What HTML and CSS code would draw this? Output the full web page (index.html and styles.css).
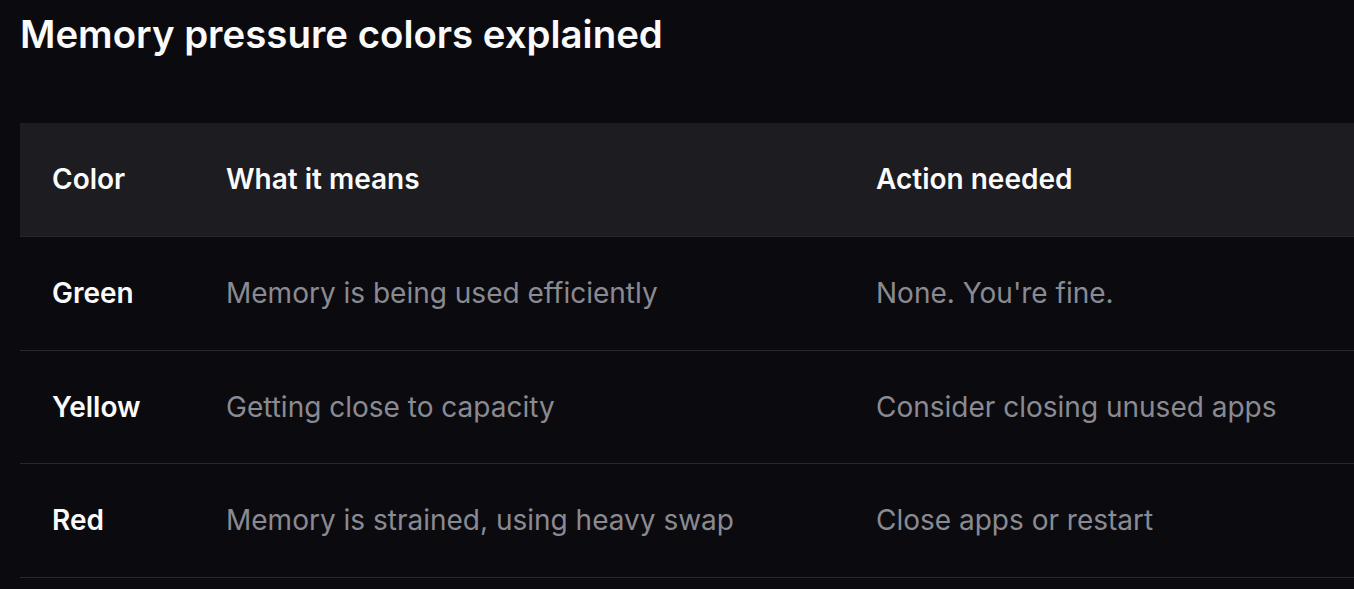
FILE: index.html
```html
<!DOCTYPE html>
<html>
<head>
<meta charset="utf-8">
<link rel="stylesheet" href="styles.css">
</head>
<body>
<main class="page">
  <h2 class="title">Memory pressure colors explained</h2>
  <table class="grid">
    <colgroup>
      <col class="c1"><col class="c2"><col class="c3">
    </colgroup>
    <thead>
      <tr><th>Color</th><th>What it means</th><th>Action needed</th></tr>
    </thead>
    <tbody>
      <tr><td class="name">Green</td><td>Memory is being used efficiently</td><td>None. You're fine.</td></tr>
      <tr><td class="name">Yellow</td><td>Getting close to capacity</td><td>Consider closing unused apps</td></tr>
      <tr><td class="name">Red</td><td>Memory is strained, using heavy swap</td><td>Close apps or restart</td></tr>
    </tbody>
  </table>
</main>
</body>
</html>
```

FILE: styles.css
```css
html, body {
  margin: 0;
  padding: 0;
  background: #0b0b0f;
  overflow: hidden;
}
.page {
  padding: 11px 0 0 20px;
  font-family: Inter, "Noto Sans", sans-serif;
  color: #fafafa;
}
.title {
  margin: 0 0 66px 0;
  font-size: 38.4px;
  line-height: 46px;
  font-weight: 600;
  letter-spacing: 0;
}
.grid {
  border-collapse: collapse;
  width: 1400px;
  table-layout: fixed;
}
.c1 { width: 174px; }
.c2 { width: 650px; }
.c3 { width: 576px; }
.grid th, .grid td {
  text-align: left;
  padding: 0 32px;
  height: 113.5px;
  font-size: 28px;
  line-height: 40px;
  border-bottom: 1px solid #27272c;
  box-sizing: border-box;
}
.grid thead th {
  background: #1c1c21;
  font-weight: 600;
  color: #fafafa;
  padding-bottom: 2px;
}
.grid td {
  color: #8a8a92;
  font-weight: 400;
}
.grid td.name {
  color: #fafafa;
  font-weight: 600;
}
```
